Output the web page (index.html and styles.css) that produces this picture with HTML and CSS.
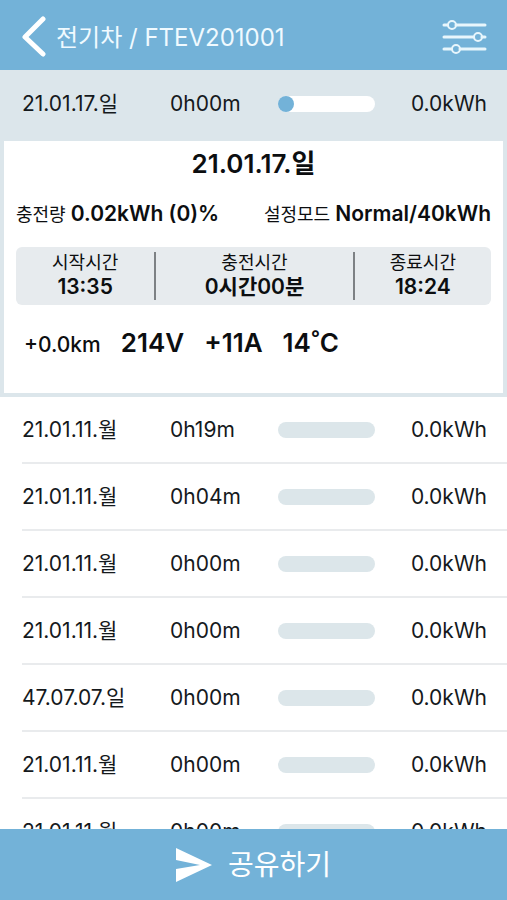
FILE: index.html
```
<!DOCTYPE html>
<html lang="ko">
<head>
    <meta charset="UTF-8">
    <meta name="viewport" content="width=device-width, initial-scale=1.0">
    <title>전기차 / FTEV201001</title>
    <link rel="stylesheet" href="styles.css">
</head>
<body>
    <header class="header">
        <button type="button" class="icon-btn back" aria-label="뒤로">
            <svg width="24" height="42" viewBox="0 0 24 42">
                <path d="M21 3 L3 21 L21 38" fill="none" stroke="#fff" stroke-width="5" stroke-linecap="round" stroke-linejoin="round"/>
            </svg>
        </button>
        <h1 class="title">전기차 / FTEV201001</h1>
        <button type="button" class="icon-btn" aria-label="설정">
            <svg width="46" height="36" viewBox="0 0 46 36" fill="none" stroke="#e8f6fc" stroke-width="3" stroke-linecap="round">
                <path d="M3 6 H6 M15 6 H44 M3 18 H32 M41 18 H44 M3 30 H10 M19 30 H44"/>
                <g stroke-width="2">
                    <circle cx="11" cy="6" r="4"/>
                    <circle cx="37" cy="18" r="4"/>
                    <circle cx="15" cy="30" r="4"/>
                </g>
            </svg>
        </button>
    </header>

    <main class="content">
        <div class="row active">
            <span>21.01.17.일</span>
            <span>0h00m</span>
            <div class="bar"><div class="dot"></div></div>
            <span class="energy">0.0kWh</span>
        </div>

        <section class="detail">
            <h2 class="detail-date">21.01.17.일</h2>
            <div class="summary">
                <p>충전량 <strong>0.02kWh (0)%</strong></p>
                <p>설정모드 <strong>Normal/40kWh</strong></p>
            </div>
            <dl class="times">
                <div class="time">
                    <dt>시작시간</dt>
                    <dd>13:35</dd>
                </div>
                <div class="time">
                    <dt>충전시간</dt>
                    <dd>0시간00분</dd>
                </div>
                <div class="time">
                    <dt>종료시간</dt>
                    <dd>18:24</dd>
                </div>
            </dl>
            <div class="stats">
                <span class="km">+0.0km</span>
                <span>214V</span>
                <span>+11A</span>
                <span>14˚C</span>
            </div>
        </section>

        <ul class="list">
            <li class="row"><span>21.01.11.월</span><span>0h19m</span><div class="bar"></div><span class="energy">0.0kWh</span></li>
            <li class="row"><span>21.01.11.월</span><span>0h04m</span><div class="bar"></div><span class="energy">0.0kWh</span></li>
            <li class="row"><span>21.01.11.월</span><span>0h00m</span><div class="bar"></div><span class="energy">0.0kWh</span></li>
            <li class="row"><span>21.01.11.월</span><span>0h00m</span><div class="bar"></div><span class="energy">0.0kWh</span></li>
            <li class="row"><span>47.07.07.일</span><span>0h00m</span><div class="bar"></div><span class="energy">0.0kWh</span></li>
            <li class="row"><span>21.01.11.월</span><span>0h00m</span><div class="bar"></div><span class="energy">0.0kWh</span></li>
            <li class="row"><span>21.01.11.월</span><span>0h00m</span><div class="bar"></div><span class="energy">0.0kWh</span></li>
        </ul>
    </main>

    <button type="button" class="share">
        <svg width="36" height="34" viewBox="0 0 36 34">
            <path d="M0 0 L36 17 L0 34 V21 L24 17 L0 12 Z" fill="#fff"/>
        </svg>
        <span class="share-label">공유하기</span>
    </button>
</body>
</html>
```
FILE: styles.css
```
* {
    margin: 0;
    padding: 0;
    box-sizing: border-box;
}

body {
    display: flex;
    flex-direction: column;
    height: 100vh;
    background-color: #fff;
    color: #15191c;
    font-family: Inter, "Noto Sans CJK KR", sans-serif;
    font-size: 21px;
}

button {
    border: none;
    background: none;
    color: #fff;
    font-family: inherit;
    cursor: pointer;
}

.header {
    display: flex;
    align-items: center;
    flex-shrink: 0;
    height: 70px;
    padding: 4px 20px 0 22px;
    background-color: #73b2d8;
}

.icon-btn {
    display: flex;
}

.title {
    flex: 1;
    margin-left: 10px;
    padding-bottom: 4px;
    color: #f0faff;
    font-size: 24px;
    font-weight: 400;
}

.content {
    flex: 1;
    min-height: 0;
    overflow-y: auto;
    scrollbar-width: none;
}

.row {
    display: grid;
    grid-template-columns: 148fr 108fr 97fr 112fr;
    align-items: center;
    height: 67px;
    padding-right: 20px;
    line-height: 32px;
    white-space: nowrap;
}

.active {
    padding-left: 22px;
    background-color: #dce6eb;
}

.bar {
    height: 16px;
    border-radius: 8px;
    background-color: #dce6ea;
}

.active .bar {
    background-color: #fff;
}

.dot {
    width: 16px;
    height: 16px;
    border-radius: 50%;
    background-color: #73b2d8;
}

.energy {
    text-align: right;
}

.detail {
    padding: 5px 12px 30px;
    border: 4px solid #dce6eb;
    color: #0c0e10;
}

.detail-date {
    font-size: 26px;
    font-weight: 600;
    line-height: 36px;
    text-align: center;
}

.summary {
    display: flex;
    justify-content: space-between;
    margin: 16px 0;
    font-size: 18px;
    line-height: 32px;
    white-space: nowrap;
}

.summary strong {
    font-size: 21px;
    font-weight: 600;
}

.times {
    display: grid;
    grid-template-columns: 138fr 198fr 138fr;
    padding: 5px 0;
    border-radius: 6px;
    background-color: #e7ebee;
    text-align: center;
}

.time + .time {
    border-left: 2px solid #7d8184;
}

.time dt {
    font-size: 18px;
    line-height: 22px;
}

.time dd {
    font-size: 21px;
    font-weight: 600;
    line-height: 26px;
}

.stats {
    display: flex;
    align-items: baseline;
    gap: 20px;
    padding: 20px 8px 0;
    font-size: 26px;
    font-weight: 600;
    line-height: 36px;
}

.km {
    font-size: 21px;
    font-weight: 500;
}

.list {
    padding-left: 22px;
    list-style: none;
}

.list .row {
    border-bottom: 2px solid #e9ebed;
}

.share {
    display: flex;
    justify-content: center;
    align-items: center;
    flex-shrink: 0;
    gap: 16px;
    height: 71px;
    background-color: #73b2d8;
    font-size: 28px;
}

.share-label {
    padding-bottom: 4px;
}
```
